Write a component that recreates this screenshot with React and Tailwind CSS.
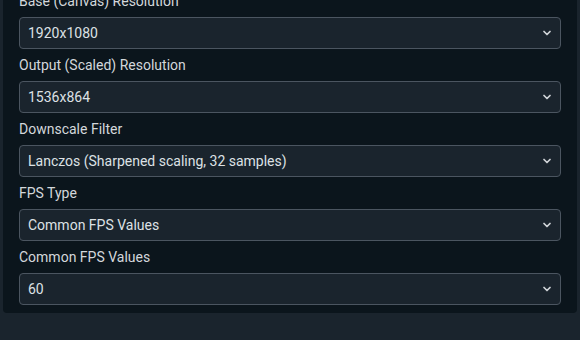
import React from "react";
import { ChevronDown } from "lucide-react";

const fields = [
  { label: "Base (Canvas) Resolution", value: "1920x1080" },
  { label: "Output (Scaled) Resolution", value: "1536x864" },
  { label: "Downscale Filter", value: "Lanczos (Sharpened scaling, 32 samples)" },
  { label: "FPS Type", value: "Common FPS Values" },
  { label: "Common FPS Values", value: "60" },
];

function SelectBox({ value }) {
  return (
    <div className="flex h-8 items-center justify-between rounded border border-[#4b5560] bg-[#1a242d] pl-2 pr-[7px] text-sm text-[#dde1e5]">
      <span>{value}</span>
      <ChevronDown size={12} strokeWidth={3.5} className="text-[#cfd3d7]" />
    </div>
  );
}

export default function App() {
  return (
    <div className="h-[340px] overflow-hidden bg-[#1a242d] font-['Roboto',sans-serif]">
      <div className="mx-[3px] -mt-[25px] rounded bg-[#0b151c] px-4 pt-4 pb-2">
        <div className="flex flex-col gap-1.5">
          {fields.map((f) => (
            <div key={f.label} className="flex flex-col gap-1.5">
              <label className="h-5 text-sm leading-5 text-[#d3d7db]">{f.label}</label>
              <SelectBox value={f.value} />
            </div>
          ))}
        </div>
      </div>
    </div>
  );
}
